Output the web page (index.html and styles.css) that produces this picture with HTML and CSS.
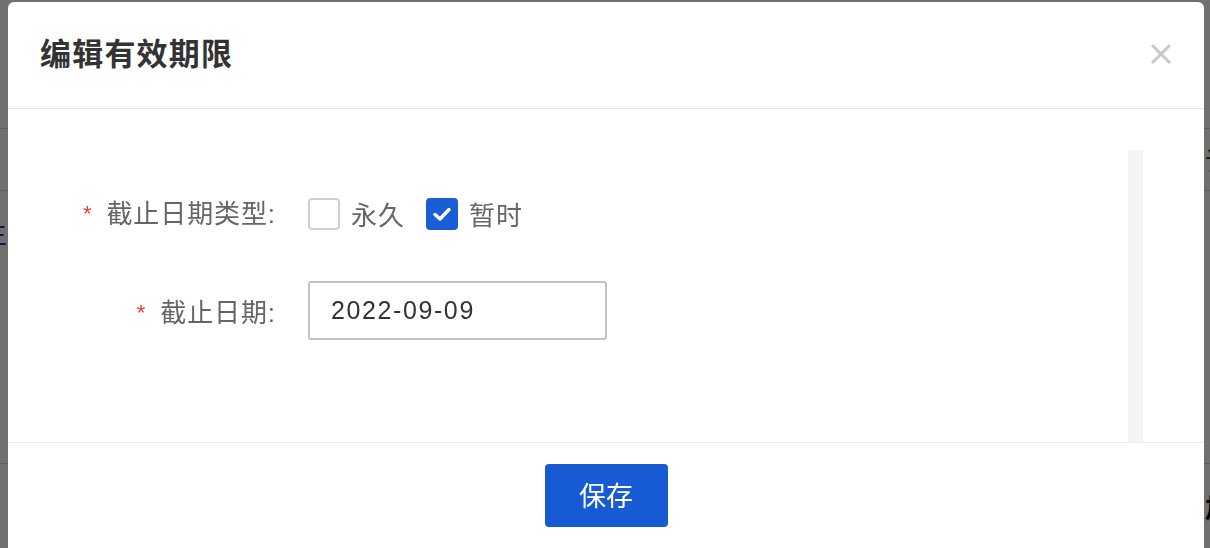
FILE: index.html
```html
<!DOCTYPE html>
<html lang="zh-CN">
<head>
<meta charset="utf-8">
<title>编辑有效期限</title>
<link rel="stylesheet" href="styles.css">
</head>
<body>
<div class="page">
  <div class="page-row r1"></div>
  <div class="page-row r2"><span class="peek-left"></span><span class="peek-right">订</span></div>
  <div class="page-row r3"><span class="peek-left blue">生</span><span class="peek-right"></span></div>
  <div class="page-row r4"></div>
  <div class="page-row r5"><span class="peek-left"></span><span class="peek-right bold">加</span></div>
</div>
<div class="overlay"></div>
<div class="modal">
  <div class="modal-header">
    <h1 class="modal-title">编辑有效期限</h1>
    <span class="close" aria-label="关闭">
      <svg width="22" height="22" viewBox="0 0 22 22"><path d="M2 2L20 20M20 2L2 20" stroke="#c9c9c9" stroke-width="3" fill="none"/></svg>
    </span>
  </div>
  <div class="modal-body">
    <div class="form">
      <div class="form-row row-type">
        <label class="form-label"><span class="req">*</span>截止日期类型:</label>
        <div class="form-control">
          <span class="check"><span class="box"></span><span class="check-text">永久</span></span>
          <span class="check checked"><span class="box"><svg width="24" height="24" viewBox="0 0 24 24"><path d="M5 12.5L10 17L19 7.5" stroke="#fff" stroke-width="3.4" fill="none" stroke-linecap="round" stroke-linejoin="round"/></svg></span><span class="check-text">暂时</span></span>
        </div>
      </div>
      <div class="form-row row-date">
        <label class="form-label"><span class="req">*</span>截止日期:</label>
        <div class="form-control">
          <div class="input">2022-09-09</div>
        </div>
      </div>
    </div>
    <div class="track"></div>
  </div>
  <div class="modal-footer">
    <button class="btn-primary">保存</button>
  </div>
</div>
</body>
</html>
```

FILE: styles.css
```css
html, body {
  margin: 0;
  padding: 0;
  height: 548px;
  overflow: hidden;
}
body {
  font-family: "Liberation Sans", "Noto Sans CJK SC", sans-serif;
  background: #fff;
}
.page {
  display: flex;
  flex-direction: column;
  overflow: hidden;
  width: 1210px;
}
.page-row {
  display: flex;
  justify-content: space-between;
  align-items: center;
  border-bottom: 1px solid #d8d8d8;
  font-size: 26px;
  color: #222;
}
.r1 { height: 128px; }
.r2 { height: 61px; }
.r3 { height: 80px; border-bottom: none; }
.r4 { height: 192px; }
.r5 { height: 85px; border-bottom: none; }
.peek-left { margin-left: -19px; width: 26px; }
.peek-right { margin-right: -21px; width: 26px; }
.blue { color: #1d3f8f; }
.bold { font-weight: 700; color: #000; }
.overlay {
  position: fixed;
  inset: 0;
  background: rgba(0, 0, 0, 0.56);
}
.modal {
  position: absolute;
  top: 2px;
  left: 8px;
  width: 1196px;
  height: 620px;
  background: #fff;
  border-radius: 6px;
  display: flex;
  flex-direction: column;
}
.modal-header {
  height: 107px;
  flex: none;
  box-sizing: border-box;
  border-bottom: 1px solid #e5e5e5;
  display: flex;
  align-items: center;
  justify-content: space-between;
  padding: 0 32px 0 32px;
}
.modal-title {
  margin: 0;
  font-size: 31px;
  font-weight: 700;
  color: #333;
  letter-spacing: 1.2px;
  line-height: 1;
  padding-bottom: 2px;
}
.close {
  display: flex;
  width: 22px;
  height: 22px;
  margin-bottom: 2px;
}
.modal-body {
  height: 334px;
  flex: none;
  box-sizing: border-box;
  padding: 41px 61px 0 0;
  display: flex;
  border-bottom: 1px solid #ebebeb;
}
.form {
  flex: 1;
  padding-top: 34px;
  display: flex;
  flex-direction: column;
  gap: 37px;
}
.form-row {
  display: flex;
  align-items: center;
}
.row-type { height: 60px; }
.form-label {
  width: 268px;
  margin-right: 32px;
  text-align: right;
  font-size: 26px;
  color: #666;
  letter-spacing: 0.9px;
  white-space: nowrap;
}
.row-type .form-label { padding-bottom: 6px; }
.req {
  color: #f03a3a;
  margin-right: 14px;
  font-size: 22px;
  position: relative;
  top: -2px;
}
.form-control {
  display: flex;
  align-items: center;
}
.check {
  display: flex;
  align-items: center;
  margin-right: 21px;
}
.box {
  width: 32px;
  height: 32px;
  box-sizing: border-box;
  border: 2px solid #cfcfcf;
  border-radius: 4px;
  display: flex;
  align-items: center;
  justify-content: center;
}
.checked .box {
  background: #1a5dd5;
  border-color: #1a5dd5;
}
.check-text {
  margin-left: 11px;
  font-size: 26px;
  letter-spacing: 1px;
  color: #666;
  padding-bottom: 2px;
}
.input {
  width: 299px;
  height: 59px;
  box-sizing: border-box;
  border: 2px solid #c3c3c3;
  border-radius: 3px;
  padding-left: 21px;
  display: flex;
  align-items: center;
  font-size: 25px;
  letter-spacing: 1.6px;
  color: #333;
}
.track {
  width: 15px;
  background: #f4f4f4;
}
.modal-footer {
  display: flex;
  justify-content: center;
  padding-top: 21px;
}
.btn-primary {
  width: 123px;
  height: 63px;
  border: none;
  border-radius: 4px;
  background: #165bd4;
  color: #fff;
  font-family: "Noto Sans CJK SC", sans-serif;
  font-size: 27px;
  padding: 0 0 3px 0;
}
```
